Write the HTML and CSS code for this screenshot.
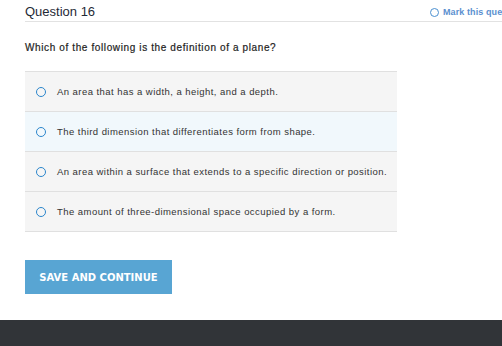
FILE: index.html
```html
<!DOCTYPE html>
<html>
<head>
<meta charset="utf-8">
<link rel="stylesheet" href="styles.css">
</head>
<body>
<div class="page">
  <div class="header">
    <h1 class="title">Question 16</h1>
    <div class="mark"><span class="mark-circle"></span><span class="mark-text">Mark this ques</span></div>
  </div>
  <p class="question">Which of the following is the definition of a plane?</p>
  <ul class="options">
    <li class="option"><span class="radio"></span><span class="opt-text">An area that has a width, a height, and a depth.</span></li>
    <li class="option hover"><span class="radio"></span><span class="opt-text">The third dimension that differentiates form from shape.</span></li>
    <li class="option"><span class="radio"></span><span class="opt-text">An area within a surface that extends to a specific direction or position.</span></li>
    <li class="option"><span class="radio"></span><span class="opt-text">The amount of three-dimensional space occupied by a form.</span></li>
  </ul>
  <button class="save">SAVE AND CONTINUE</button>
</div>
<div class="footer"></div>
</body>
</html>
```
FILE: styles.css
```css
html, body {
  margin: 0;
  padding: 0;
  height: 100%;
  overflow: hidden;
  background: #ffffff;
  font-family: "Liberation Sans", Arial, sans-serif;
}
.page {
  height: 320px;
  padding-left: 25px;
  box-sizing: border-box;
}
.header {
  display: flex;
  justify-content: space-between;
  align-items: center;
  height: 21px;
  border-bottom: 1px solid #e2e2e2;
  white-space: nowrap;
  overflow: hidden;
}
.title {
  margin: 0;
  font-size: 13px;
  font-weight: normal;
  color: #1f2a36;
  line-height: 16px;
  padding-top: 2px;
}
.mark {
  display: flex;
  align-items: center;
  width: 72px;
  overflow: hidden;
  padding-top: 3px;
}
.mark-circle {
  flex: none;
  width: 7px;
  height: 7px;
  border: 1px solid #4a8fd0;
  border-radius: 50%;
  margin-right: 4px;
}
.mark-text {
  font-size: 9px;
  font-weight: bold;
  color: #5b8fcf;
  letter-spacing: 0.1px;
  white-space: nowrap;
}
.question {
  margin: 0;
  padding-top: 20px;
  height: 49px;
  box-sizing: border-box;
  font-size: 10px;
  line-height: 12px;
  font-weight: normal;
  letter-spacing: 0.62px;
  color: #1e1e1e;
  -webkit-text-stroke: 0.2px #1e1e1e;
}
.options {
  list-style: none;
  margin: 0;
  padding: 0;
  width: 372px;
  border-top: 1px solid #e0e0e0;
}
.option {
  display: flex;
  align-items: center;
  height: 39px;
  border-bottom: 1px solid #e0e0e0;
  background: #f5f5f5;
  padding-left: 11px;
}
.option.hover {
  background: #f1f8fc;
}
.radio {
  flex: none;
  width: 8px;
  height: 8px;
  border: 1.5px solid #2b86cc;
  border-radius: 50%;
  margin-right: 11px;
}
.opt-text {
  font-size: 9.5px;
  letter-spacing: 0.45px;
  color: #333333;
  padding-bottom: 1px;
}
.save {
  display: block;
  margin-top: 28px;
  width: 147px;
  height: 34px;
  border: none;
  background: #58a5d3;
  color: #ffffff;
  font-family: "DejaVu Sans", Verdana, sans-serif;
  font-weight: bold;
  font-size: 10px;
  padding: 0;
}
.footer {
  height: 26px;
  background: #313438;
}
```
